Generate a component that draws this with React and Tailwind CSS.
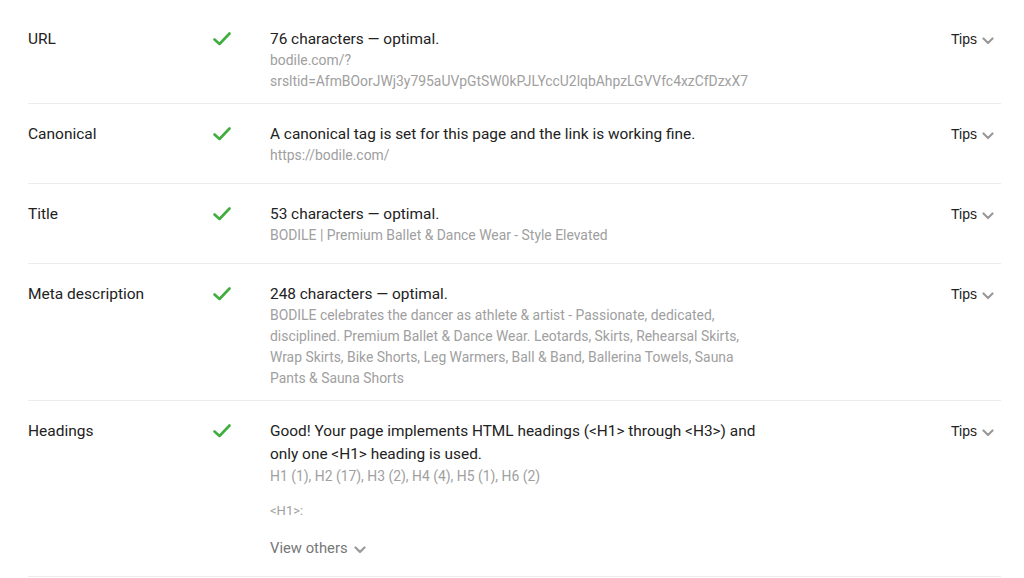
import React from "react";

const Check = () => (
  <svg width="18" height="14" viewBox="0 0 18 14" fill="none">
    <path d="M1.5 7.5 L6.5 12 L16.5 1.5" stroke="#3fae3f" strokeWidth="2.6" strokeLinecap="round" strokeLinejoin="round" />
  </svg>
);

const Chevron = ({ color = "#9a9a9a" }) => (
  <svg width="12" height="8" viewBox="0 0 12 8" fill="none">
    <path d="M1.5 1.5 L6 6 L10.5 1.5" stroke={color} strokeWidth="2.2" strokeLinecap="round" strokeLinejoin="round" />
  </svg>
);

const Row = ({ label, main, children, className = "", mainLeading = "leading-[22px]" }) => (
  <div className={"flex border-b border-[#ececec] " + className}>
    <div className="w-[184px] shrink-0 text-[15.5px] leading-[22px] text-[#222]">{label}</div>
    <div className="w-[58px] shrink-0 pt-[4px] pl-[1px]">
      <Check />
    </div>
    <div className="w-[490px] shrink-0">
      <div className={"text-[15.4px] text-[#222] " + mainLeading}>{main}</div>
      {children}
    </div>
    <div className="flex-1 flex justify-end">
      <button className="flex items-center gap-[5px] h-[22px] pr-[7px] text-[14px] text-[#222] font-['Liberation_Sans',sans-serif]">
        Tips
        <span className="mt-[3px]"><Chevron /></span>
      </button>
    </div>
  </div>
);

const Sub = ({ children }) => (
  <div className="text-[13.9px] leading-[21px] text-[#a0a0a0]">{children}</div>
);

export default function App() {
  return (
    <div className="w-[1024px] h-[578px] bg-white overflow-hidden font-['Roboto',sans-serif]">
      <div className="ml-[28px] w-[973px]">
        <Row label="URL" main="76 characters — optimal." className="pt-[28px] pb-[11px]">
          <Sub>
            bodile.com/?
            <br />
            srsltid=AfmBOorJWj3y795aUVpGtSW0kPJLYccU2lqbAhpzLGVVfc4xzCfDzxX7
          </Sub>
        </Row>
        <Row label="Canonical" main="A canonical tag is set for this page and the link is working fine." className="pt-[19px] pb-[17px]">
          <Sub>https://bodile.com/</Sub>
        </Row>
        <Row label="Title" main="53 characters — optimal." className="pt-[19px] pb-[17px]">
          <Sub>BODILE | Premium Ballet &amp; Dance Wear - Style Elevated</Sub>
        </Row>
        <Row label="Meta description" main="248 characters — optimal." className="pt-[19px] pb-[11px]">
          <Sub>
            BODILE celebrates the dancer as athlete &amp; artist - Passionate, dedicated, disciplined. Premium Ballet &amp; Dance Wear. Leotards, Skirts, Rehearsal Skirts, Wrap Skirts, Bike Shorts, Leg Warmers, Ball &amp; Band, Ballerina Towels, Sauna Pants &amp; Sauna Shorts
          </Sub>
        </Row>
        <Row
          label="Headings"
          main="Good! Your page implements HTML headings (<H1> through <H3>) and only one <H1> heading is used."
          mainLeading="leading-[23px]"
          className="pt-[19px] pb-[18px]"
        >
          <Sub>H1 (1), H2 (17), H3 (2), H4 (4), H5 (1), H6 (2)</Sub>
          <div className="mt-[16px] text-[13px] leading-[16px] text-[#a0a0a0]">&lt;H1&gt;:</div>
          <button className="mt-[19px] flex items-center gap-[6px] text-[14.8px] leading-[20px] text-[#777]">
            View others
            <span className="mt-[3px]"><Chevron /></span>
          </button>
        </Row>
      </div>
    </div>
  );
}
